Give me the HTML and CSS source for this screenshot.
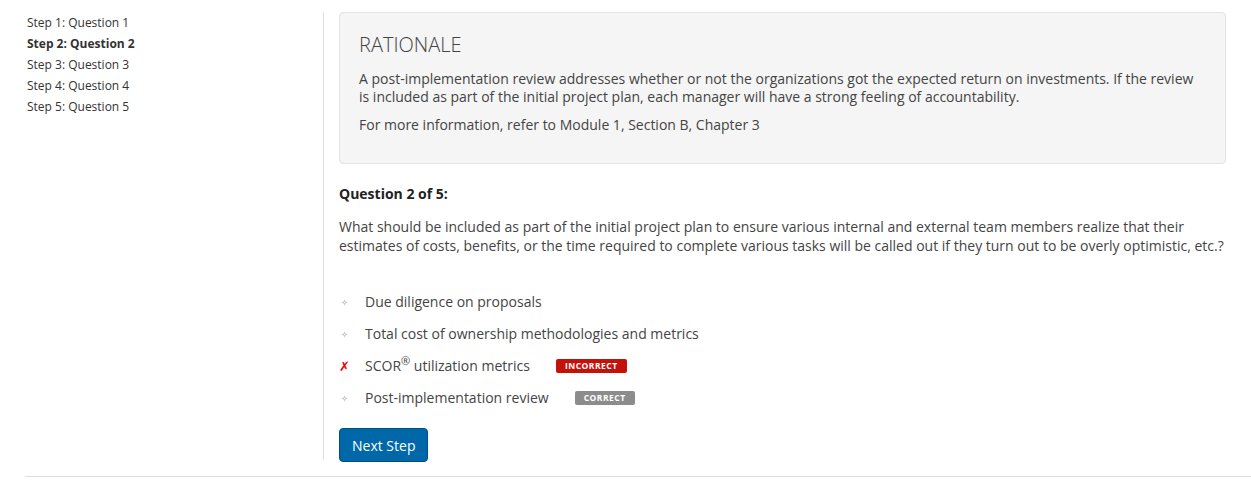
FILE: index.html
```html
<!DOCTYPE html>
<html>
<head>
<meta charset="utf-8">
<link rel="stylesheet" href="styles.css">
</head>
<body>
<div class="page">
  <div class="layout">
    <nav class="steps">
      <div class="step">Step 1: Question 1</div>
      <div class="step active">Step 2: Question 2</div>
      <div class="step">Step 3: Question 3</div>
      <div class="step">Step 4: Question 4</div>
      <div class="step">Step 5: Question 5</div>
    </nav>
    <main class="main">
      <section class="rationale">
        <h3 class="rationale-title">RATIONALE</h3>
        <p class="para">A post-implementation review addresses whether or not the organizations got the expected return on investments. If the review is included as part of the initial project plan, each manager will have a strong feeling of accountability.</p>
        <p class="para">For more information, refer to Module 1, Section B, Chapter 3</p>
      </section>
      <h4 class="q-title">Question 2 of 5:</h4>
      <p class="q-text">What should be included as part of the initial project plan to ensure various internal and external team members realize that their estimates of costs, benefits, or the time required to complete various tasks will be called out if they turn out to be overly optimistic, etc.?</p>
      <ul class="options">
        <li class="option"><span class="mark"><svg width="7" height="7" viewBox="0 0 7 7"><path d="M3.5 0 L4.5 2.5 L7 3.5 L4.5 4.5 L3.5 7 L2.5 4.5 L0 3.5 L2.5 2.5 Z" fill="#cfcfcf"/><rect x="3" y="3" width="1" height="1" fill="#eee"/></svg></span><span class="opt-text">Due diligence on proposals</span></li>
        <li class="option"><span class="mark"><svg width="7" height="7" viewBox="0 0 7 7"><path d="M3.5 0 L4.5 2.5 L7 3.5 L4.5 4.5 L3.5 7 L2.5 4.5 L0 3.5 L2.5 2.5 Z" fill="#cfcfcf"/><rect x="3" y="3" width="1" height="1" fill="#eee"/></svg></span><span class="opt-text">Total cost of ownership methodologies and metrics</span></li>
        <li class="option"><span class="mark wrong">✗</span><span class="opt-text">SCOR<sup class="reg">®</sup> utilization metrics</span><span class="badge badge-bad">INCORRECT</span></li>
        <li class="option"><span class="mark"><svg width="7" height="7" viewBox="0 0 7 7"><path d="M3.5 0 L4.5 2.5 L7 3.5 L4.5 4.5 L3.5 7 L2.5 4.5 L0 3.5 L2.5 2.5 Z" fill="#cfcfcf"/><rect x="3" y="3" width="1" height="1" fill="#eee"/></svg></span><span class="opt-text">Post-implementation review</span><span class="badge badge-ok">CORRECT</span></li>
      </ul>
      <button class="btn">Next Step</button>
    </main>
  </div>
  <hr class="rule">
</div>
</body>
</html>
```

FILE: styles.css
```css
* { box-sizing: border-box; }
html, body { margin: 0; padding: 0; background: #fff; }
body {
  font-family: "Open Sans", "Noto Sans", "DejaVu Sans", sans-serif;
  color: #444;
  font-size: 14px;
}
.page { padding: 12px 0 0 25px; }
.layout { display: flex; align-items: stretch; }
.steps {
  width: 299px;
  flex: none;
  border-right: 1px solid #dedede;
  padding: 0 0 0 2px;
  margin-bottom: 2px;
}
.step { font-size: 12px; line-height: 21px; color: #333; }
.step.active { font-weight: 700; }
.main { flex: 1; padding: 0 25px 0 15px; }
.rationale {
  background: #f5f5f5;
  border: 1px solid #e3e3e3;
  border-radius: 4px;
  padding: 20px 19px 19px 19px;
  height: 152px;
}
.rationale-title {
  margin: 1px 0 14px;
  font-size: 20px;
  line-height: 22px;
  font-weight: 300;
  color: #444;
}
.para { margin: 0 0 10px; line-height: 18px; font-size: 14px; }
.q-title { margin: 20px 0 0; font-size: 14px; font-weight: 700; color: #222; line-height: 20px; }
.q-text { margin: 13px 0 0; line-height: 19px; }
.options { list-style: none; margin: 31px 0 0; padding: 0; }
.option { display: flex; align-items: center; height: 32px; }
.mark { width: 26px; flex: none; display: flex; align-items: center; padding-left: 2px; }
.mark.wrong { color: #e00; font-size: 13px; font-weight: 700; font-style: italic; padding-left: 0; }
.opt-text { line-height: 20px; }
.reg { font-size: 11px; line-height: 0; vertical-align: 6px; }
.badge {
  display: inline-block;
  margin-left: 26px;
  font-size: 8.5px;
  font-weight: 700;
  letter-spacing: 0.5px;
  color: #fff;
  border-radius: 2px;
  padding: 0 9px;
  line-height: 14px;
  height: 14px;
}
.badge-bad { background: #c4120b; }
.badge-ok { background: #8c8c8c; }
.btn {
  margin-top: 14px;
  font-family: inherit;
  font-size: 14px;
  color: #fff;
  background: #0068a8;
  border: 1px solid #004f80;
  border-radius: 4px;
  padding: 0 12px;
  height: 34px;
  white-space: nowrap;
}
.rule { margin: 14px 0 0; border: 0; border-top: 1px solid #dedede; height: 0; }
```
